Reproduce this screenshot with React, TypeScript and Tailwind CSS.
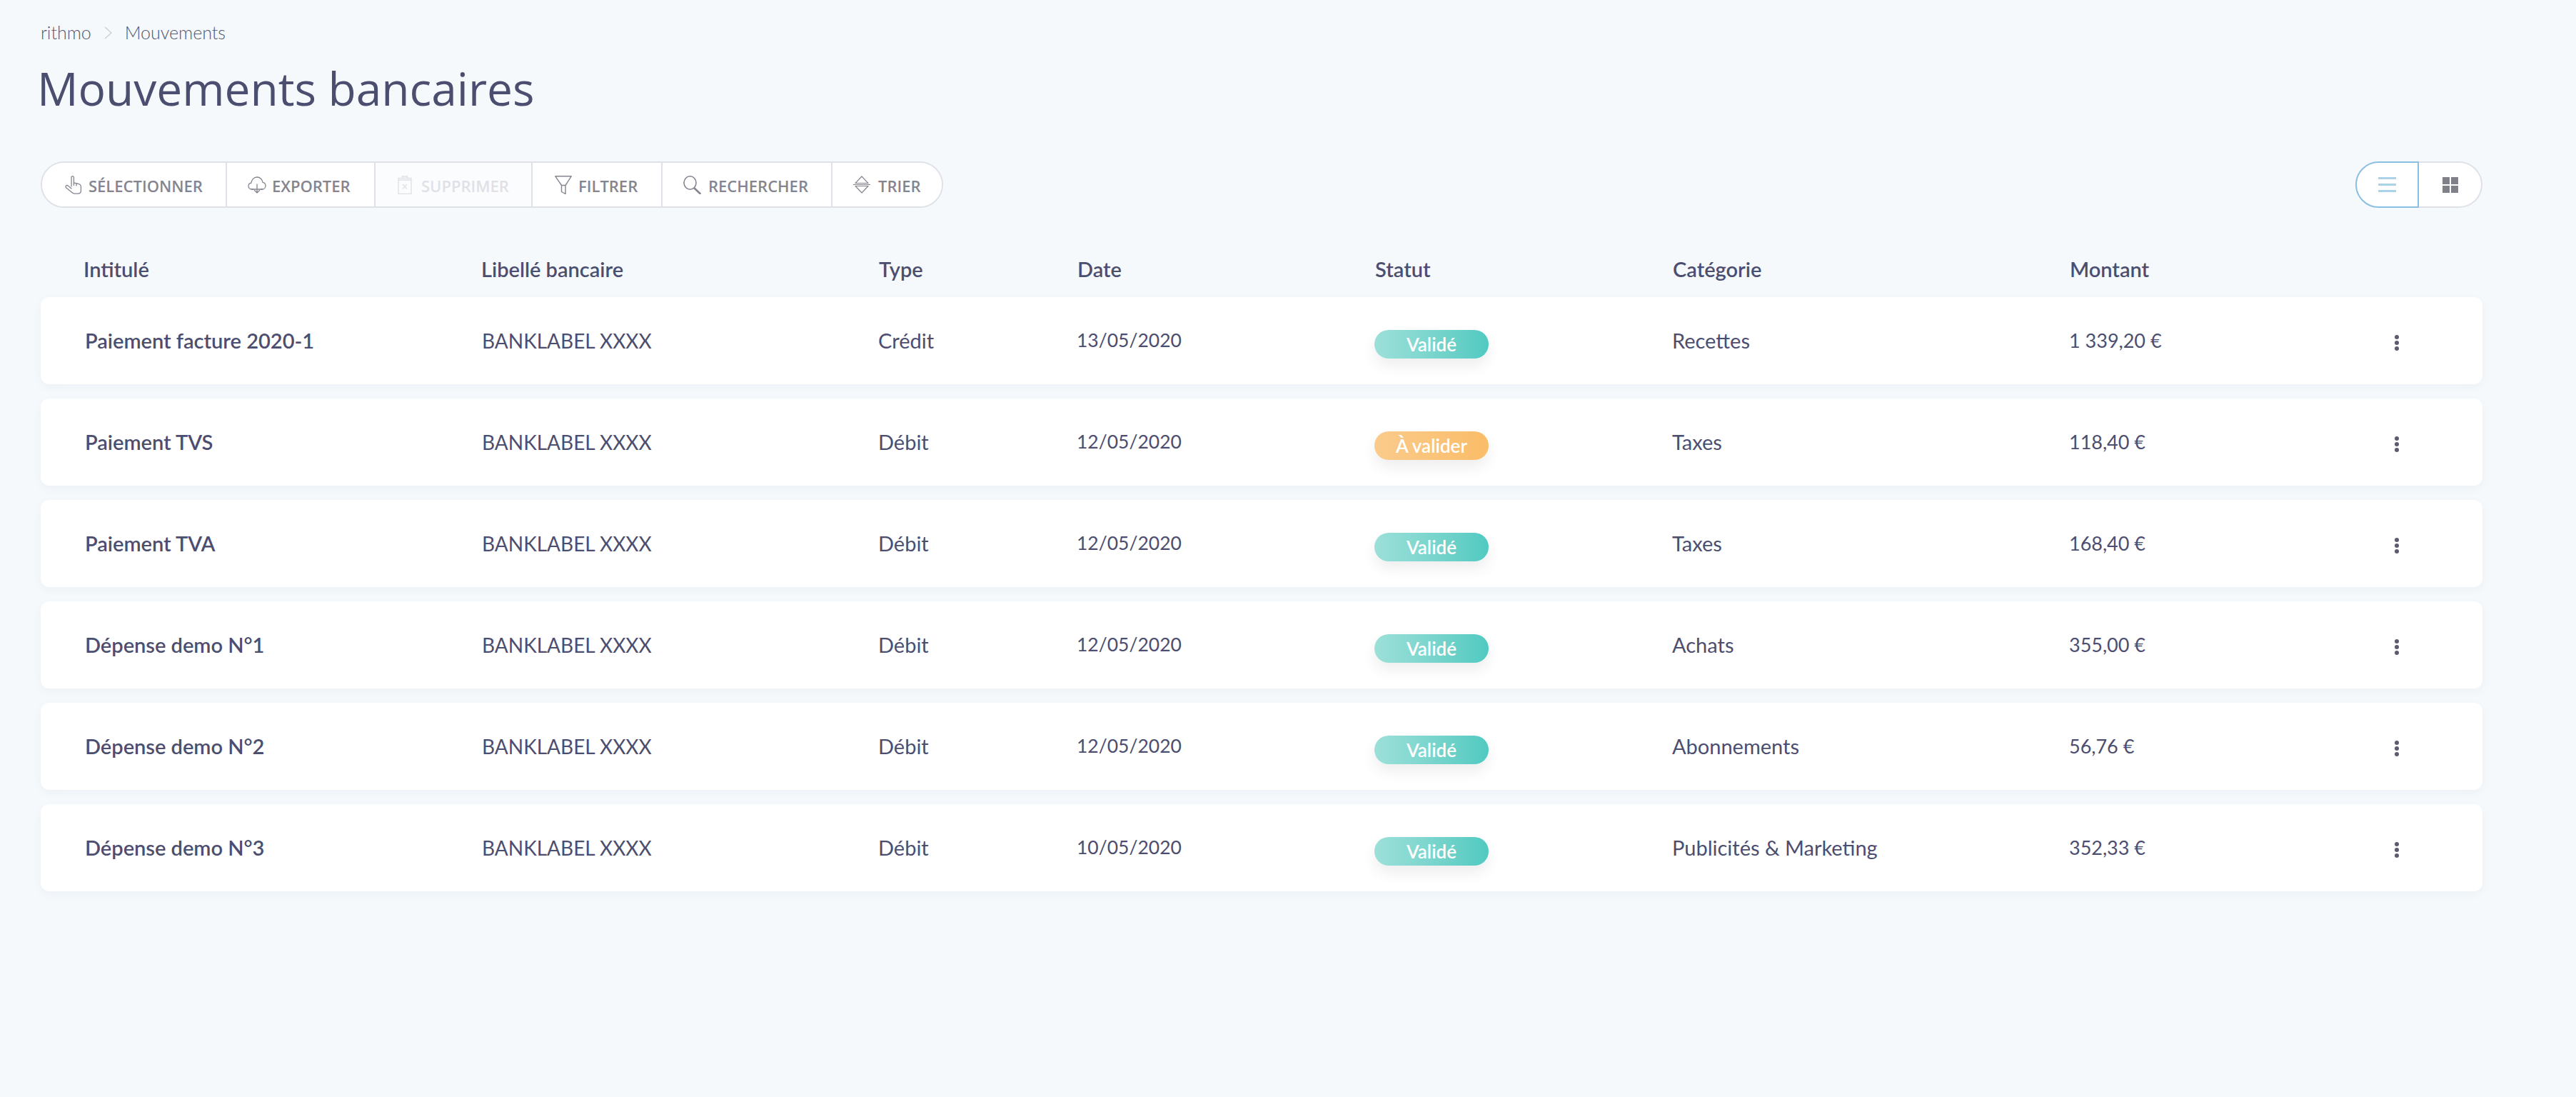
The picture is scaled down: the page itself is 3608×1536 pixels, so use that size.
import type { ReactNode } from 'react';

const lato = "font-['Lato',sans-serif]";

const HandIcon = () => (
  <svg viewBox="0 0 24 26" className="w-[24px] h-[26px]" fill="none" stroke="currentColor" strokeWidth="1.3" strokeLinejoin="round" strokeLinecap="round">
    <path d="M9 15V2.600C9 1.400 9.800.7 10.700.7s1.700.7 1.700 1.900V10l5.600 1.200c2.600.6 4.400 1.400 4.400 4.200v5.400c0 2.800-1.600 4.400-4.200 4.400h-4.400c-2 0-3.300-.8-4.600-2.200L1.600 16.800c-.8-.9-.8-2.100 0-2.800.8-.7 1.900-.6 2.700.1L9 18" />
    <path d="M12.400 10v3.500M16 11v3" />
  </svg>
);

const CloudIcon = () => (
  <svg viewBox="0 0 26 24" className="w-[26px] h-[24px]" fill="none" stroke="currentColor" strokeWidth="1.3" strokeLinejoin="round" strokeLinecap="round">
    <path d="M7.500 18H5.800C3 18 1 16 1 13.500c0-2.300 1.600-4 3.900-4.300C5.200 5.200 8.400 1 13 1c4.300 0 7.600 3.400 8 7.400 2.400.4 4 2.400 4 4.800 0 2.700-2.100 4.800-4.800 4.800h-1.700" />
    <path d="M5 18h16M13 11v12M9.500 19.500 13 23l3.500-3.500" />
  </svg>
);

const TrashIcon = () => (
  <svg viewBox="0 0 20 26" className="w-[20px] h-[26px]" fill="none" stroke="currentColor" strokeWidth="1.300">
    <path d="M1 3.500h18v22H1zM6.500 3.500V1h7v2.500M1 6h18M7 12l6 6.500M13 12l-6 6.500" />
  </svg>
);

const FunnelIcon = () => (
  <svg viewBox="0 0 24 26" className="w-[24px] h-[26px]" fill="none" stroke="currentColor" strokeWidth="1.400" strokeLinejoin="round">
    <path d="M.8.800h22.400L15 13.500v12L9.500 22.500v-9zM9.500 13.500H15" />
  </svg>
);

const SearchIcon = () => (
  <svg viewBox="0 0 25 26" className="w-[25px] h-[26px]" fill="none" stroke="currentColor" strokeWidth="1.600" strokeLinecap="round">
    <ellipse cx="9.500" cy="10" rx="8.500" ry="9.200" />
    <path d="M16 18l7.500 7" strokeWidth="2.600" />
  </svg>
);

const SortIcon = () => (
  <svg viewBox="0 0 24 25" className="w-[24px] h-[25px]" fill="none" stroke="currentColor" strokeWidth="1.200" strokeLinejoin="round">
    <path d="M12 1l9 9.500H3zM12 24l9-9.500H3zM0 12.500h24" />
  </svg>
);

interface ToolProps {
  icon: ReactNode;
  label: string;
  className: string;
  gap: string;
}

const tools: ToolProps[] = [
  { icon: <HandIcon />, label: 'SÉLECTIONNER', className: 'w-[257px] pl-[32px] rounded-l-[31px] bg-white text-[#84858f]', gap: 'gap-[9px]' },
  { icon: <CloudIcon />, label: 'EXPORTER', className: 'w-[208px] pl-[29px] bg-white text-[#84858f] border-l-2 border-l-[#e0e1e8]', gap: 'gap-[8px]' },
  { icon: <TrashIcon />, label: 'SUPPRIMER', className: 'w-[220px] pl-[31px] bg-[#fbfcfd] text-[#e0e1e7] border-l-2 border-l-[#e0e1e8]', gap: 'gap-[13px]' },
  { icon: <FunnelIcon />, label: 'FILTRER', className: 'w-[182px] pl-[31px] bg-white text-[#84858f] border-l-2 border-l-[#e0e1e8]', gap: 'gap-[9px]' },
  { icon: <SearchIcon />, label: 'RECHERCHER', className: 'w-[238px] pl-[29px] bg-white text-[#84858f] border-l-2 border-l-[#e0e1e8]', gap: 'gap-[10px]' },
  { icon: <SortIcon />, label: 'TRIER', className: 'w-[155px] pl-[29px] rounded-r-[31px] bg-white text-[#84858f] border-l-2 border-l-[#e0e1e8]', gap: 'gap-[11px]' },
];

const columns = 'grid grid-cols-[556px_555px_278px_417px_417px_556px_456px_1fr] items-center';
const headerColumns = 'grid grid-cols-[557px_557px_278px_417px_417px_556px_458px_1fr] items-center';

const rows = [
  { title: 'Paiement facture 2020-1', type: 'Crédit', date: '13/05/2020', status: 'Validé', category: 'Recettes', amount: '1 339,20 €' },
  { title: 'Paiement TVS', type: 'Débit', date: '12/05/2020', status: 'À valider', category: 'Taxes', amount: '118,40 €' },
  { title: 'Paiement TVA', type: 'Débit', date: '12/05/2020', status: 'Validé', category: 'Taxes', amount: '168,40 €' },
  { title: 'Dépense demo N°1', type: 'Débit', date: '12/05/2020', status: 'Validé', category: 'Achats', amount: '355,00 €' },
  { title: 'Dépense demo N°2', type: 'Débit', date: '12/05/2020', status: 'Validé', category: 'Abonnements', amount: '56,76 €' },
  { title: 'Dépense demo N°3', type: 'Débit', date: '10/05/2020', status: 'Validé', category: 'Publicités & Marketing', amount: '352,33 €' },
];

export default function App() {
  return (
    <div className={`min-h-[1536px] bg-[#f5f9fc] pl-[57px] pr-[131px] text-[#4c4e70] ${lato}`}>
      {/* Breadcrumb */}
      <div className="flex h-[92px] items-center text-[25px] font-light text-[#55576c]">
        <span>rithmo</span>
        <svg viewBox="0 0 12 18" className="ml-[18px] mr-[17px] h-[18px] w-[12px] text-[#c9cad2]" fill="none" stroke="currentColor" strokeWidth="1.2">
          <path d="M1 1l9 8-9 8" />
        </svg>
        <span>Mouvements</span>
      </div>

      {/* Title */}
      <h1 className="-ml-[5px] mt-[2px] h-[60px] font-['Open_Sans',sans-serif] text-[64px] leading-[60px] font-normal text-[#4c4e70]">Mouvements bancaires</h1>

      {/* Toolbar */}
      <div className="mt-[72px] flex justify-between">
        <div className="flex h-[65px] w-[1264px] rounded-[33px] border-2 border-[#e0e1e8]">
          {tools.map((tool) => (
            <div key={tool.label} className={`flex shrink-0 items-center ${tool.gap} ${tool.className}`}>
              {tool.icon}
              <span className="pt-[3px] font-['Open_Sans',sans-serif] text-[22px] font-semibold">{tool.label}</span>
            </div>
          ))}
        </div>

        <div className="flex h-[65px] w-[178px]">
          <div className="flex w-[89px] items-center justify-center rounded-l-[33px] border-2 border-[#8abfe0] bg-white">
            <svg viewBox="0 0 25 21" className="h-[21px] w-[25px] text-[#a9d3e8]" fill="currentColor">
              <rect y="0" width="25" height="3" />
              <rect y="9" width="25" height="3" />
              <rect y="18" width="25" height="3" />
            </svg>
          </div>
          <div className="flex w-[89px] items-center justify-center rounded-r-[33px] border-y-2 border-r-2 border-[#e0e1e8] bg-white">
            <svg viewBox="0 0 22 22" className="h-[22px] w-[22px] text-[#808088]" fill="currentColor">
              <rect width="10" height="10" />
              <rect x="12" width="10" height="10" />
              <rect y="12" width="10" height="10" />
              <rect x="12" y="12" width="10" height="10" />
            </svg>
          </div>
        </div>
      </div>

      {/* Table header */}
      <div className={`${headerColumns} h-[125px] pl-[60px] pt-[46px] text-[29px] font-semibold`}>
        <span>Intitulé</span>
        <span>Libellé bancaire</span>
        <span>Type</span>
        <span>Date</span>
        <span>Statut</span>
        <span>Catégorie</span>
        <span>Montant</span>
      </div>

      {/* Rows */}
      <div className="flex flex-col gap-[20px]">
        {rows.map((row) => (
          <div key={row.title} className={`${columns} h-[122px] rounded-[12px] bg-white pl-[62px] text-[29px] shadow-[0_4px_12px_rgba(70,90,120,0.05)]`}>
            <span className="font-semibold">{row.title}</span>
            <span className="text-[28px]">BANKLABEL XXXX</span>
            <span>{row.type}</span>
            <span className="text-[26.500px]">{row.date}</span>
            <span className="pt-[10px]">
              <span
                className={`flex h-[40px] w-[160px] items-center justify-center rounded-[20px] text-[26px] font-semibold text-white shadow-[0_10px_20px_rgba(0,0,0,0.07)] ${
                  row.status === 'Validé'
                    ? 'bg-gradient-to-r from-[#9ce0d9] to-[#50cac1]'
                    : 'bg-gradient-to-r from-[#facb8c] to-[#fabd68]'
                }`}
              >
                {row.status}
              </span>
            </span>
            <span>{row.category}</span>
            <span className="text-[27px]">{row.amount}</span>
            <span className="flex flex-col gap-[2px] pt-[5px]">
              <span className="h-[6px] w-[6px] rounded-full bg-[#5b5c6e]" />
              <span className="h-[6px] w-[6px] rounded-full bg-[#5b5c6e]" />
              <span className="h-[6px] w-[6px] rounded-full bg-[#5b5c6e]" />
            </span>
          </div>
        ))}
      </div>
    </div>
  );
}
